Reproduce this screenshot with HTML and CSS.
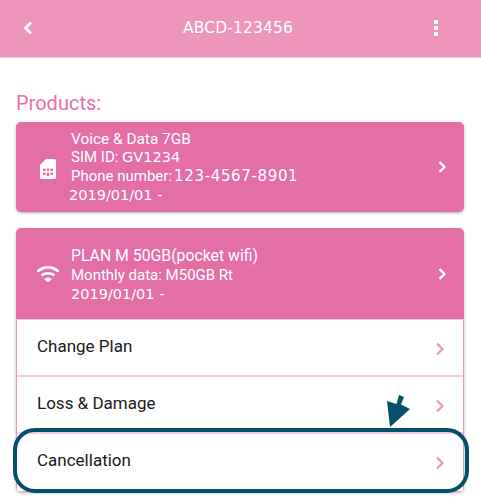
FILE: index.html
```html
<!DOCTYPE html>
<html lang="en">
<head>
    <meta charset="UTF-8">
    <meta name="viewport" content="width=device-width, initial-scale=1.0">
    <title>ABCD-123456</title>
    <link rel="stylesheet" href="styles.css">
</head>
<body>
    <div class="header">
        <svg class="back-icon" width="12" height="16" viewBox="0 0 12 16"><path d="M9 2.5 L3.5 8 L9 13.5" fill="none" stroke="#fff" stroke-width="2.6"/></svg>
        <div class="header-title">ABCD-123456</div>
        <svg class="more-icon" width="4" height="16" viewBox="0 0 4 16"><rect width="4" height="4" rx="0.8" fill="#fff"/><rect y="6" width="4" height="4" rx="0.8" fill="#fff"/><rect y="12" width="4" height="4" rx="0.8" fill="#fff"/></svg>
    </div>

    <div class="content">
        <div class="section-title">Products:</div>

        <div class="card">
            <div class="card-head head-sim">
                <svg class="sim-icon" width="18" height="22" viewBox="0 0 18 22"><path fill-rule="evenodd" fill="#fff" d="M7 1 H15.5 Q17 1 17 2.5 V19.5 Q17 21 15.5 21 H2.5 Q1 21 1 19.5 V7 Z M4 10.5 V13 H6.5 V10.5 Z M7.8 10.5 V13 H10.2 V10.5 Z M11.5 10.5 V13 H14 V10.5 Z M4 14.5 V17 H6.5 V14.5 Z M7.8 14.5 V18 H10.2 V14.5 Z M11.5 14.5 V17 H14 V14.5 Z"/></svg>
                <div class="card-text">
                    <div class="sim-name">Voice &amp; Data 7GB</div>
                    <div>SIM ID: <span class="num">GV1234</span></div>
                    <div>Phone number:<span class="num phone">123-4567-8901</span></div>
                    <div class="num date-sim">2019/01/01 -</div>
                </div>
                <svg class="card-arrow" width="10" height="14" viewBox="0 0 10 14"><path d="M2.5 2 L7.5 7 L2.5 12" fill="none" stroke="#fff" stroke-width="2.2"/></svg>
            </div>
        </div>

        <div class="card">
            <div class="card-head head-plan">
                <svg class="wifi-icon" width="24" height="18" viewBox="0 0 24 18"><path d="M1.5 6.5 C7.5 1 16.5 1 22.5 6.5" fill="none" stroke="#fff" stroke-width="2.6"/><path d="M5.5 10.5 C9 7.5 15 7.5 18.5 10.5" fill="none" stroke="#fff" stroke-width="2.6"/><path d="M8 14 L12 17.5 L16 14 C13.5 12 10.5 12 8 14 Z" fill="#fff"/></svg>
                <div class="card-text">
                    <div class="plan-name">PLAN M 50GB(pocket wifi)</div>
                    <div>Monthly data: M50GB Rt</div>
                    <div class="num">2019/01/01 -</div>
                </div>
                <svg class="card-arrow" width="10" height="14" viewBox="0 0 10 14"><path d="M2.5 2 L7.5 7 L2.5 12" fill="none" stroke="#fff" stroke-width="2.2"/></svg>
            </div>
            <ul class="menu">
                <li class="menu-item">Change Plan <svg width="10" height="16" viewBox="0 0 10 16"><path d="M2 2.5 L7.5 8 L2 13.5" fill="none" stroke="#ee95bc" stroke-width="2.2"/></svg></li>
                <li class="menu-item">Loss &amp; Damage <svg width="10" height="16" viewBox="0 0 10 16"><path d="M2 2.5 L7.5 8 L2 13.5" fill="none" stroke="#ee95bc" stroke-width="2.2"/></svg></li>
                <li class="menu-item">Cancellation <svg width="10" height="16" viewBox="0 0 10 16"><path d="M2 2.5 L7.5 8 L2 13.5" fill="none" stroke="#ee95bc" stroke-width="2.2"/></svg></li>
            </ul>
        </div>
    </div>

    <div class="highlight"></div>
    <svg class="pointer" width="26" height="36" viewBox="0 0 26 36"><path d="M13 2 L18 4 L15 11.5 L24 16 L4 34 L1 8 L10.5 11 Z" fill="#04506b"/></svg>
</body>
</html>
```

FILE: styles.css
```css
* {
    margin: 0;
    padding: 0;
    box-sizing: border-box;
    font-family: Roboto, sans-serif;
}

html, body {
    height: 500px;
    overflow: hidden;
}

body {
    background: white;
    position: relative;
}

.header {
    height: 58px;
    background: #ee95bc;
    border-bottom: 1px solid #f6cbdd;
    display: flex;
    align-items: center;
    justify-content: space-between;
    padding: 0 43px 2px 22px;
    color: white;
}

.header-title {
    font-family: "DejaVu Sans", sans-serif;
    font-size: 15.4px;
    letter-spacing: 0.2px;
    margin-left: 8px;
}

.content {
    width: 480px;
    padding: 33px 16px 0;
}

.section-title {
    font-size: 20px;
    line-height: 24px;
    color: #e96fa6;
    margin-bottom: 7px;
}

.card {
    border-radius: 5px;
    box-shadow: 0 1px 3px rgba(0, 0, 0, 0.3);
    margin-bottom: 16px;
    overflow: hidden;
}

.card-head {
    background: #e46fa6;
    color: white;
    display: flex;
    align-items: center;
    position: relative;
    font-size: 15px;
    line-height: 18.7px;
}

.head-sim {
    height: 90px;
    padding-left: 23px;
}

.head-plan {
    height: 91px;
    padding: 4px 0 0 20px;
}

.sim-name {
    font-size: 15.4px;
}

.plan-name {
    font-size: 15.8px;
}

.sim-icon {
    margin-right: 14px;
    margin-top: 3px;
}

.wifi-icon {
    margin-right: 11px;
    margin-top: -4px;
}

.card-text {
    flex: 1;
}

.num {
    font-family: "DejaVu Sans", sans-serif;
    font-size: 14.5px;
}

.phone {
    font-size: 15px;
    letter-spacing: 0.65px;
    margin-left: 2px;
}

.date-sim {
    margin-left: -2px;
}

.card-arrow {
    margin-right: 17px;
}

.head-plan .card-arrow {
    margin-top: -4px;
}

.menu {
    list-style: none;
    border: 1px solid #ee95bc;
    border-top: 1px solid #f6cbdd;
}

.menu-item {
    height: 57px;
    display: flex;
    align-items: center;
    justify-content: space-between;
    padding: 0 18px 4px 20px;
    font-size: 17px;
    color: #1a1a1a;
    border-bottom: 2px solid #f6cbdd;
}

.menu-item svg {
    margin-top: 6px;
}

.menu-item:last-child {
    border-bottom-color: transparent;
}

.highlight {
    position: absolute;
    left: 13px;
    top: 428px;
    width: 456px;
    height: 65px;
    border: 4.5px solid #04506b;
    border-radius: 22px;
}

.pointer {
    position: absolute;
    left: 386px;
    top: 393px;
}
```
